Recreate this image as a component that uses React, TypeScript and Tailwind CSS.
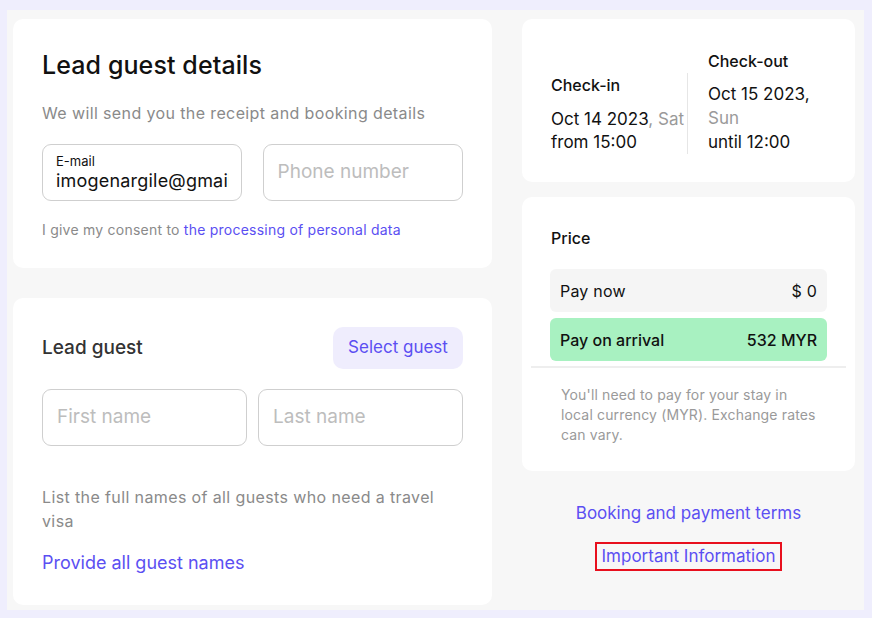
import React from "react";

const font = { fontFamily: "Inter, 'Noto Sans', sans-serif" };

export default function App() {
  return (
    <div
      className="w-[872px] h-[618px] bg-[#efeefd] pt-[10px] pl-[7px] pr-[8px] pb-[8px] overflow-hidden"
      style={font}
    >
      <div className="h-[600px] bg-[#f7f7f7] flex gap-[30px] pl-[6px] pt-[9px]">
        {/* Left column */}
        <div className="w-[479px] flex flex-col gap-[30px]">
          <div className="h-[249px] bg-white rounded-[10px] px-[29px] pt-[30px]">
            <h1 className="text-[25px] leading-[32px] font-medium text-[#111] tracking-[0.1px]">
              Lead guest details
            </h1>
            <p className="mt-[20px] text-[16px] leading-[24px] text-[#8a8a8a] tracking-[0.38px]">
              We will send you the receipt and booking details
            </p>
            <div className="mt-[19px] flex gap-[21px]">
              <div className="w-[200px] h-[57px] border border-[#cfcfcf] rounded-[9px] pl-[13px] pr-[12px] pt-[8px] overflow-hidden">
                <div className="text-[13px] leading-[16px] text-[#111]">E-mail</div>
                <div className="mt-[1px] text-[18px] leading-[22px] text-[#111] whitespace-nowrap overflow-hidden tracking-[0.2px]">
                  imogenargile@gmail.com
                </div>
              </div>
              <div className="w-[201px] h-[57px] border border-[#cfcfcf] rounded-[9px] pl-[14px] flex items-center">
                <span className="text-[19px] text-[#bdbdbd]">Phone number</span>
              </div>
            </div>
            <p className="mt-[19px] text-[14px] leading-[20px] text-[#8a8a8a] tracking-[0.23px]">
              I give my consent to{" "}
              <span className="text-[#5b4ff2]">the processing of personal data</span>
            </p>
          </div>

          <div className="h-[307px] bg-white rounded-[10px] px-[29px] pt-[29px]">
            <div className="flex items-center justify-between">
              <h2 className="text-[19px] leading-[28px] font-medium text-[#333]">Lead guest</h2>
              <button className="h-[42px] w-[130px] rounded-[10px] bg-[#efedfd] text-[17px] text-[#5b4ff2]">
                Select guest
              </button>
            </div>
            <div className="mt-[20px] flex gap-[11px]">
              <div className="w-[205px] h-[57px] border border-[#cfcfcf] rounded-[9px] pl-[14px] flex items-center">
                <span className="text-[19px] text-[#bdbdbd]">First name</span>
              </div>
              <div className="w-[205px] h-[57px] border border-[#cfcfcf] rounded-[9px] pl-[14px] flex items-center">
                <span className="text-[19px] text-[#bdbdbd]">Last name</span>
              </div>
            </div>
            <p className="mt-[39px] text-[16px] leading-[24px] text-[#8a8a8a] pr-[20px] tracking-[0.38px]">
              List the full names of all guests who need a travel visa
            </p>
            <p className="mt-[16px] text-[18px] leading-[28px] text-[#5b4ff2]">
              Provide all guest names
            </p>
          </div>
        </div>

        {/* Right column */}
        <div className="w-[333px] flex flex-col">
          <div className="h-[163px] bg-white rounded-[10px] px-[29px] pt-[29px] flex items-end pb-[28px]">
            <div className="w-[137px] border-r border-[#e6e6e6]">
              <div className="text-[16px] leading-[24px] font-medium text-[#111]">Check-in</div>
              <div className="mt-[11px] text-[17px] leading-[23px] text-[#111]">
                Oct 14 2023<span className="text-[#9a9a9a]">, Sat</span>
                <br />
                from 15:00
              </div>
            </div>
            <div className="flex-1 pl-[20px]">
              <div className="text-[16px] leading-[24px] font-medium text-[#111]">Check-out</div>
              <div className="mt-[9px] text-[17px] leading-[24px] text-[#111]">
                Oct 15 2023,
                <br />
                <span className="text-[#9a9a9a]">Sun</span>
                <br />
                until 12:00
              </div>
            </div>
          </div>

          <div className="mt-[15px] h-[274px] bg-white rounded-[10px] px-[28px] pt-[29px]">
            <div className="pl-[1px] text-[16px] leading-[24px] font-medium text-[#111]">Price</div>
            <div className="mt-[19px] h-[43px] rounded-[6px] bg-[#f5f5f5] px-[10px] flex items-center justify-between text-[16px] text-[#111] tracking-[0.2px]">
              <span>Pay now</span>
              <span>$ 0</span>
            </div>
            <div className="mt-[6px] h-[43px] rounded-[6px] bg-[#a8f1c1] px-[10px] flex items-center justify-between text-[16px] font-medium text-[#111]">
              <span>Pay on arrival</span>
              <span>532 MYR</span>
            </div>
            <div className="mt-[5px] -mx-[19px] h-[2px] bg-[#eeeeee]" />
            <p className="mt-[17px] pl-[11px] pr-[8px] text-[14px] leading-[20px] text-[#9a9a9a] tracking-[0.15px]">
              You'll need to pay for your stay in local currency (MYR). Exchange rates can vary.
            </p>
          </div>

          <div className="mt-[30px] flex flex-col items-center">
            <span className="text-[17px] leading-[24px] text-[#5b4ff2]">Booking and payment terms</span>
            <span className="mt-[17px] border-2 border-[#e8101e] px-[5px] py-[1px] text-[17px] leading-[23px] text-[#5b4ff2]">
              Important Information
            </span>
          </div>
        </div>
      </div>
    </div>
  );
}
